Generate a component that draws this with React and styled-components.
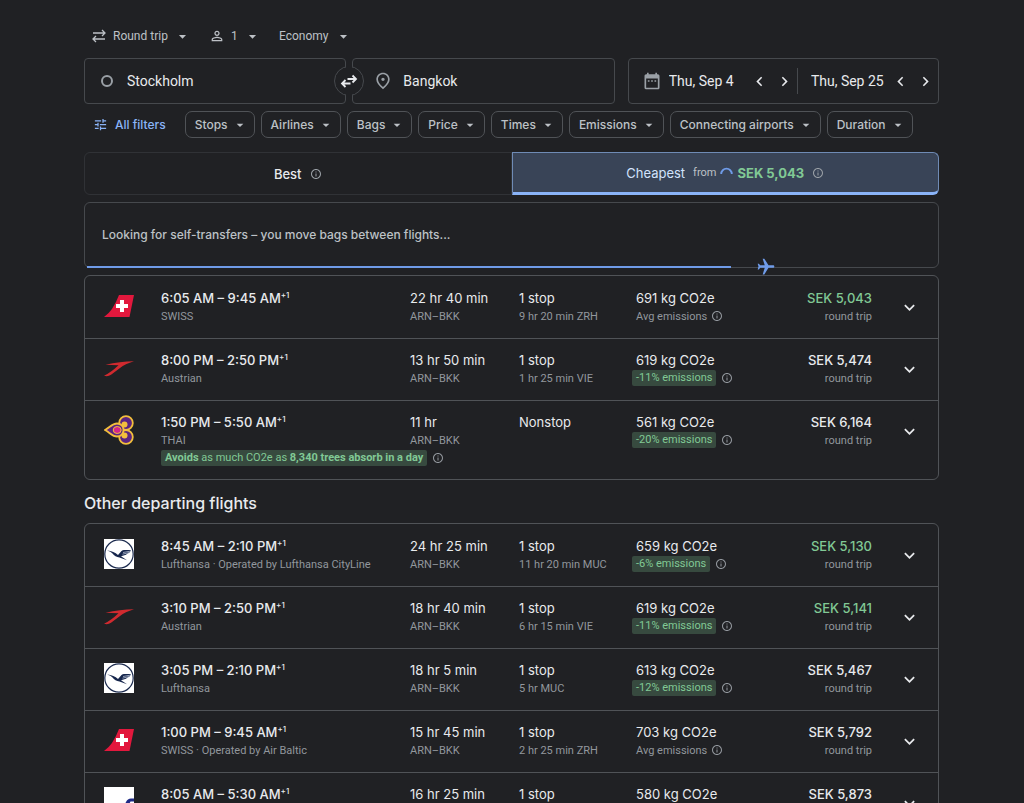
import React from "react";
import { useState } from "react";
import styled, { createGlobalStyle } from "styled-components";
import {
    MdArrowDropDown,
    MdChevronLeft,
    MdChevronRight,
    MdDateRange,
    MdExpandMore,
    MdFlight,
    MdInfoOutline,
    MdOutlinePlace,
    MdPersonOutline,
    MdTune,
} from "react-icons/md";

const GlobalStyle = createGlobalStyle`
  * {
    box-sizing: border-box;
  }
  body {
    margin: 0;
    background: #202124;
    color: #e8eaed;
    font-family: Roboto, "Liberation Sans", sans-serif;
    font-size: 14px;
  }
  button, input, select {
    font: inherit;
    color: inherit;
    background: none;
    border: 0;
    margin: 0;
    padding: 0;
  }
  button, select {
    cursor: pointer;
  }
  svg {
    flex: none;
  }
`;

const display = `Inter, "Open Sans", sans-serif`;

const Page = styled.main`
  padding: 24px 85px 32px 84px;
`;

/* trip options */
const TripBar = styled.div`
  display: flex;
  align-items: center;
  gap: 18px;
  height: 24px;
  padding-left: 7px;
  margin-bottom: 10px;
`;
const TripField = styled.label`
  display: flex;
  align-items: center;
  color: #bdc1c6;
  font-size: 12px;
  & > svg:first-child {
    margin-right: 6px;
  }
  select {
    appearance: none;
    outline: none;
    margin-right: 6px;
  }
`;

/* places and dates */
const SearchBar = styled.div`
  display: flex;
  gap: 13px;
  margin-bottom: 7px;
`;
const Places = styled.div`
  position: relative;
  display: grid;
  grid-template-columns: 1fr 1fr;
  gap: 6px;
  flex: 532 1 0;
`;
const Place = styled.label`
  display: flex;
  align-items: center;
  min-width: 0;
  height: 46px;
  padding-left: ${(props) => props.$left};
  border: 1px solid #46494d;
  border-radius: 4px;
  color: #9aa0a6;
  & > svg {
    margin-right: 10px;
  }
`;
const Ring = styled.span`
  width: 12px;
  height: 12px;
  margin-right: 14px;
  border: 2px solid #9aa0a6;
  border-radius: 50%;
`;
const TextInput = styled.input`
  flex: 1;
  min-width: 0;
  color: #e8eaed;
  font-size: 14px;
  outline: none;
`;
const SwapButton = styled.button`
  position: absolute;
  top: 50%;
  left: 50%;
  width: 30px;
  height: 30px;
  transform: translate(-50%, -50%);
  display: grid;
  place-items: center;
  background: #202124;
  border: 1px solid #46494d;
  border-radius: 50%;
  /* hides the ring where it crosses the gap between the two boxes */
  &::before {
    content: "";
    position: absolute;
    top: -2px;
    bottom: -2px;
    left: 11px;
    width: 6px;
    background: #202124;
  }
  svg {
    position: relative;
  }
`;
const Dates = styled.div`
  display: grid;
  grid-template-columns: 168fr 141fr;
  align-items: center;
  flex: 310 1 0;
  min-width: 0;
  border: 1px solid #46494d;
  border-radius: 4px;
`;
const DateField = styled.div`
  display: flex;
  align-items: center;
  min-width: 0;
  height: 26px;
  padding-left: 13px;
  & + & {
    border-left: 1px solid #46494d;
  }
  & > svg {
    margin-right: 7px;
    color: #9aa0a6;
  }
`;
const StepButton = styled.button`
  display: grid;
  place-items: center;
  flex: none;
  width: 25px;
  height: 24px;
`;

/* filter chips */
const Filters = styled.div`
  display: flex;
  align-items: center;
  gap: 6px;
  margin-bottom: 14px;
  font-family: ${display};
  font-size: 12px;
  font-weight: 500;
  white-space: nowrap;
`;
const AllFilters = styled.button`
  display: flex;
  align-items: center;
  gap: 7px;
  padding: 0 13px 0 9px;
  color: #8ab4f8;
`;
const Chip = styled.button`
  display: flex;
  align-items: center;
  gap: 4px;
  height: 27px;
  padding: 0 6px 0 9px;
  border: 1px solid #505357;
  border-radius: 7px;
  color: #bdc1c6;
`;

/* best and cheapest */
const Tabs = styled.div`
  display: grid;
  grid-template-columns: 1fr 1fr;
  height: 43px;
  margin-bottom: 7px;
  font-family: ${display};
`;
const Tab = styled.button`
  display: flex;
  align-items: center;
  justify-content: center;
  gap: 8px;
  border: 1px solid #303236;
  border-radius: 6px 0 0 6px;
  font-size: 13px;
  font-weight: 500;
  &[aria-selected="true"] {
    background: #394457;
    border-color: #6f8bb5;
    border-bottom: 3px solid #8ab4f8;
    border-radius: 0 6px 6px 0;
    color: #d2e3fc;
    font-weight: 400;
  }
  & > svg {
    color: #9aa0a6;
  }
`;
const FromPrice = styled.span`
  display: flex;
  align-items: center;
  gap: 4px;
  color: #81c995;
  font-weight: 700;
  small {
    font-family: Roboto, sans-serif;
    font-size: 11px;
    font-weight: 400;
    color: #bdc1c6;
  }
`;

const Notice = styled.section`
  position: relative;
  display: flex;
  align-items: center;
  height: 66px;
  margin-bottom: 7px;
  padding: 0 17px 2px;
  border: 1px solid #46494d;
  border-radius: 6px;
  font-family: ${display};
  font-size: 12px;
  font-weight: 500;
  color: #bdc1c6;
`;
const Progress = styled.div`
  position: absolute;
  left: 2px;
  bottom: -1px;
  height: 2px;
  background: #6f9be8;
`;
const Plane = styled(MdFlight)`
  position: absolute;
  bottom: -10px;
  transform: rotate(90deg);
  color: #6f9be8;
`;

/* results */
const FlightList = styled.ul`
  margin: 0;
  padding: 0;
  list-style: none;
  border: 1px solid #505357;
  border-radius: 6px;
`;
const Flight = styled.li`
  display: grid;
  grid-template-columns: 57px 249fr 109fr 117fr 137fr 99fr 66px;
  align-items: start;
  min-height: 62px;
  padding: 13px 0 13px 19px;
  & + & {
    border-top: 1px solid #505357;
    padding-top: 12px;
  }
`;
const Logo = styled.svg`
  width: 30px;
  height: 30px;
  margin-top: 2px;
`;
const Cell = styled.div`
  min-width: 0;
  white-space: nowrap;
  text-align: ${(props) => props.$align || "left"};
`;
const Main = styled.div`
  font-family: ${display};
  font-size: 13px;
  line-height: 19px;
  font-weight: ${(props) => (props.$strong ? 500 : 400)};
  color: ${(props) => (props.$cheap ? "#81c995" : "#e8eaed")};
  sup {
    font-size: 8px;
    line-height: 0;
  }
`;
const Sub = styled.div`
  display: flex;
  align-items: center;
  justify-content: ${(props) => (props.$end ? "flex-end" : "flex-start")};
  gap: 4px;
  height: 16px;
  font-size: 11px;
  color: #92979d;
`;
const Badge = styled.span`
  height: 16px;
  line-height: 16px;
  padding: 0 4px;
  margin-left: ${(props) => (props.$hang ? "-4px" : "0")};
  margin-right: 1px;
  border-radius: 2px;
  background: #374a3f;
  color: #81c995;
`;
const AvoidLine = styled(Sub)`
  margin-top: 2px;
`;
const ExpandButton = styled.button`
  display: grid;
  place-items: center;
  width: 30px;
  height: 30px;
  margin: 3px 0 0 22px;
`;
const Heading = styled.h2`
  margin: 13px 0 9px;
  font-family: ${display};
  font-size: 16px;
  line-height: 21px;
  font-weight: 500;
`;

const logos = {
    swiss: (
        <>
            <path d="M15 4H30L25.500 26H0Q9 20 15 4Z" fill="#e2183d" />
            <path d="M16 9h4v4h4v4h-4v4h-4v-4h-4v-4h4z" fill="#fff" />
        </>
    ),
    austrian: (
        <path d="M1.500 11.800Q16 8.300 30 8.300Q21 11 16 15L7 21.800Q4 24 0 22.800Q7 19.500 14.500 12.300Q7 11.800 1.500 11.800Z" fill="#d02a2f" />
    ),
    thai: (
        <>
            <circle cx="22" cy="8" r="6.800" fill="#5a2480" stroke="#f3bf3c" strokeWidth="1.800" />
            <circle cx="22" cy="22" r="6.800" fill="#5a2480" stroke="#f3bf3c" strokeWidth="1.800" />
            <path d="M1 15C6 12.500 8 8.500 13 8.500C17 8.500 19.500 11.500 19.500 15C19.500 18.500 17 21.500 13 21.500C8 21.500 6 17.500 1 15Z" fill="#5a2480" stroke="#f3bf3c" strokeWidth="1.800" />
            <circle cx="20.500" cy="9.500" r="3" fill="#f3bf3c" />
            <circle cx="20.500" cy="20.500" r="3" fill="#f3bf3c" />
            <ellipse cx="13.200" cy="15" rx="4" ry="3.500" fill="#d6248a" stroke="#f3bf3c" strokeWidth="1" />
        </>
    ),
    lufthansa: (
        <>
            <rect width="30" height="30" fill="#fff" />
            <circle cx="15" cy="15" r="14.200" fill="none" stroke="#1b2a4e" strokeWidth="1.200" />
            <path d="M3 11.500Q10 12 14 16L17.500 12Q18.500 11 20 11H27L25.500 13.500L23.500 14.500L22 15.800L17 17.300L23 21.300L15.500 18.600Q11 18 8.500 14.500Q7 12.700 3 11.500Z" fill="#16264c" />
            <path d="M19 13.500L27 12M18.500 15.200L25.500 13.500" stroke="#b4bed2" strokeWidth="0.800" />
        </>
    ),
    finnair: (
        <>
            <rect width="30" height="30" fill="#fff" />
            <path d="M30 11.500H27Q23.500 11.500 22 15L16 27H21L24 20H30V16.500H25.500L26.500 14.500H30Z" fill="#1f2a86" />
        </>
    ),
};

const topFlights = [
    { logo: "swiss", time: "6:05 AM – 9:45 AM", airline: "SWISS", duration: "22 hr 40 min", stops: "1 stop", via: "9 hr 20 min ZRH", co2: "691", price: "5,043", cheap: true },
    { logo: "austrian", time: "8:00 PM – 2:50 PM", airline: "Austrian", duration: "13 hr 50 min", stops: "1 stop", via: "1 hr 25 min VIE", co2: "619", diff: "-11%", price: "5,474" },
    { logo: "thai", time: "1:50 PM – 5:50 AM", airline: "THAI", duration: "11 hr", stops: "Nonstop", co2: "561", diff: "-20%", price: "6,164", trees: "8,340" },
];

const otherFlights = [
    { logo: "lufthansa", time: "8:45 AM – 2:10 PM", airline: "Lufthansa · Operated by Lufthansa CityLine", duration: "24 hr 25 min", stops: "1 stop", via: "11 hr 20 min MUC", co2: "659", diff: "-6%", price: "5,130", cheap: true },
    { logo: "austrian", time: "3:10 PM – 2:50 PM", airline: "Austrian", duration: "18 hr 40 min", stops: "1 stop", via: "6 hr 15 min VIE", co2: "619", diff: "-11%", price: "5,141", cheap: true },
    { logo: "lufthansa", time: "3:05 PM – 2:10 PM", airline: "Lufthansa", duration: "18 hr 5 min", stops: "1 stop", via: "5 hr MUC", co2: "613", diff: "-12%", price: "5,467" },
    { logo: "swiss", time: "1:00 PM – 9:45 AM", airline: "SWISS · Operated by Air Baltic", duration: "15 hr 45 min", stops: "1 stop", via: "2 hr 25 min ZRH", co2: "703", price: "5,792" },
    { logo: "finnair", time: "8:05 AM – 5:30 AM", airline: "Finnair", duration: "16 hr 25 min", stops: "1 stop", via: "3 hr 5 min HEL", co2: "580", diff: "-17%", price: "5,873" },
];

const filters = ["Stops", "Airlines", "Bags", "Price", "Times", "Emissions", "Connecting airports", "Duration"];

const RoundTripIcon = () => (
    <svg width="16" height="14" viewBox="0 0 16 14" fill="none" stroke="currentColor" strokeWidth="1.300">
        <path d="M2 4H14M11 1L14 4L11 7M14 10H2M5 7L2 10L5 13" />
    </svg>
);

const SwapIcon = () => (
    <svg width="18" height="14" viewBox="0 0 18 14" fill="none" stroke="currentColor" strokeWidth="1.800">
        <path d="M7.500 5H16M12.500 1.500L16 5L12.500 8.500M10.500 9.500H2M5.500 6L2 9.500L5.500 13" />
    </svg>
);

const Spinner = () => (
    <svg width="13" height="13" viewBox="0 0 13 13" fill="none" stroke="#6f9be8" strokeWidth="1.800">
        <path d="M1.200 8A5.300 5.300 0 0 1 11.800 8" />
    </svg>
);

const FlightRow = ({ flight }) => (
    <Flight>
        <Logo viewBox="0 0 30 30" aria-hidden="true">{logos[flight.logo]}</Logo>
        <Cell>
            <Main $strong>{flight.time}<sup>+1</sup></Main>
            <Sub>{flight.airline}</Sub>
            {flight.trees && (
                <AvoidLine>
                    <Badge><b>Avoids</b> as much CO2e as <b>{flight.trees} trees absorb in a day</b></Badge>
                    <MdInfoOutline size={12} />
                </AvoidLine>
            )}
        </Cell>
        <Cell>
            <Main>{flight.duration}</Main>
            <Sub>ARN–BKK</Sub>
        </Cell>
        <Cell>
            <Main>{flight.stops}</Main>
            <Sub>{flight.via}</Sub>
        </Cell>
        <Cell>
            <Main>{flight.co2} kg CO2e</Main>
            <Sub>
                {flight.diff ? <Badge $hang>{flight.diff} emissions</Badge> : "Avg emissions"}
                <MdInfoOutline size={12} />
            </Sub>
        </Cell>
        <Cell $align="right">
            <Main $strong $cheap={flight.cheap}>SEK {flight.price}</Main>
            <Sub $end>round trip</Sub>
        </Cell>
        <ExpandButton aria-label="Flight details"><MdExpandMore size={21} /></ExpandButton>
    </Flight>
);

const DateBox = ({ label, icon, initial }) => {
    const [value, setValue] = useState(initial);
    return (
        <DateField>
            {icon}
            <TextInput aria-label={label} value={value} onChange={(e) => setValue(e.target.value)} />
            <StepButton aria-label="Previous day"><MdChevronLeft size={19} /></StepButton>
            <StepButton aria-label="Next day"><MdChevronRight size={19} /></StepButton>
        </DateField>
    );
};

const App = () => {
    const [from, setFrom] = useState("Stockholm");
    const [to, setTo] = useState("Bangkok");
    const [tab, setTab] = useState("cheapest");

    const swap = () => {
        setFrom(to);
        setTo(from);
    };

    return (
        <Page>
            <GlobalStyle />
            <TripBar>
                <TripField>
                    <RoundTripIcon />
                    <select aria-label="Trip type"><option>Round trip</option></select>
                    <MdArrowDropDown size={17} />
                </TripField>
                <TripField>
                    <MdPersonOutline size={16} />
                    <select aria-label="Passengers"><option>1</option></select>
                    <MdArrowDropDown size={17} />
                </TripField>
                <TripField>
                    <select aria-label="Cabin class"><option>Economy</option></select>
                    <MdArrowDropDown size={17} />
                </TripField>
            </TripBar>

            <SearchBar>
                <Places>
                    <Place $left="16px">
                        <Ring />
                        <TextInput aria-label="From" value={from} onChange={(e) => setFrom(e.target.value)} />
                    </Place>
                    <Place $left="20px">
                        <MdOutlinePlace size={20} />
                        <TextInput aria-label="To" value={to} onChange={(e) => setTo(e.target.value)} />
                    </Place>
                    <SwapButton aria-label="Swap" onClick={swap}><SwapIcon /></SwapButton>
                </Places>
                <Dates>
                    <DateBox label="Departure" initial="Thu, Sep 4" icon={<MdDateRange size={20} />} />
                    <DateBox label="Return" initial="Thu, Sep 25" />
                </Dates>
            </SearchBar>

            <Filters>
                <AllFilters><MdTune size={15} />All filters</AllFilters>
                {filters.map((name) => (
                    <Chip key={name}>{name}<MdArrowDropDown size={16} /></Chip>
                ))}
            </Filters>

            <Tabs role="tablist">
                <Tab role="tab" aria-selected={tab === "best"} onClick={() => setTab("best")}>
                    Best <MdInfoOutline size={12} />
                </Tab>
                <Tab role="tab" aria-selected={tab === "cheapest"} onClick={() => setTab("cheapest")}>
                    Cheapest
                    <FromPrice><small>from</small><Spinner />SEK 5,043</FromPrice>
                    <MdInfoOutline size={12} />
                </Tab>
            </Tabs>

            <Notice>
                Looking for self-transfers – you move bags between flights...
                <Progress style={{ width: "75.500%" }} />
                <Plane size={20} style={{ left: "78.700%" }} />
            </Notice>

            <FlightList>
                {topFlights.map((flight) => <FlightRow key={flight.time} flight={flight} />)}
            </FlightList>

            <Heading>Other departing flights</Heading>
            <FlightList>
                {otherFlights.map((flight) => <FlightRow key={flight.time} flight={flight} />)}
            </FlightList>
        </Page>
    );
};

export default App;
